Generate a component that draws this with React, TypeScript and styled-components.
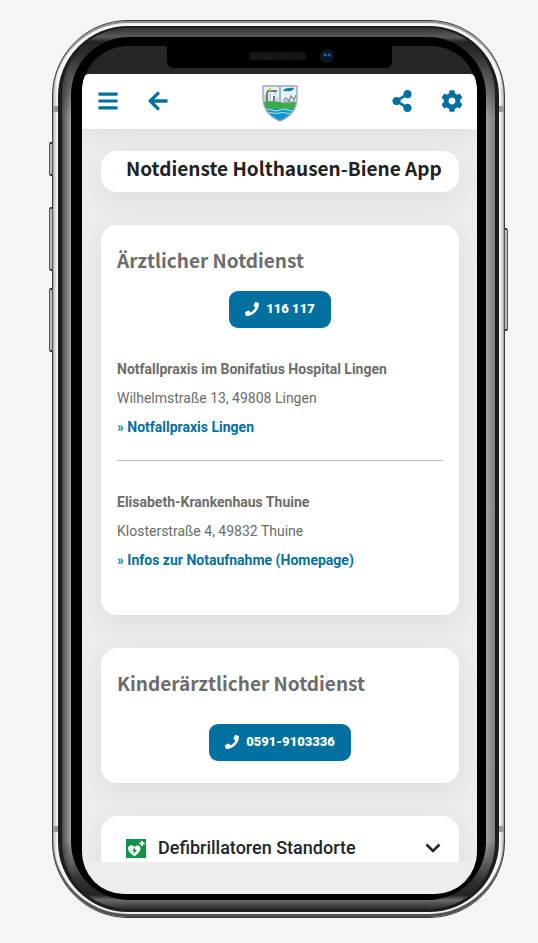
import React from 'react';
import styled, { createGlobalStyle } from 'styled-components';
import { FaArrowLeft, FaBars, FaCog, FaPhone, FaShareAlt } from 'react-icons/fa';

const GlobalStyle = createGlobalStyle`
  *, *::before, *::after { box-sizing: border-box; }
  body {
    margin: 0;
    background: #f5f5f5;
    font-family: Roboto, sans-serif;
    font-size: 14px;
    color: #6c6c6c;
  }
`;

const Stage = styled.div`
  height: 100vh;
  min-height: 600px;
  padding: 20px 33px 25px 52px;
`;

/* Phone housing: nested layers from the polished rim to the glass. */
const Rim = styled.div`
  position: relative;
  height: 100%;
  padding: 5px;
  border: 1px solid #3a3b3c;
  border-radius: 76px;
  background: linear-gradient(to right, #b9b9b9, #f6f6f6 4px, #f6f6f6 calc(100% - 4px), #b0b0b0);
  box-shadow: inset 0 -3px 1px #4b4b4b, inset 0 2px 1px #8b8b8b;
`;

const Band = styled.div`
  height: 100%;
  padding: 2px 4px 3px;
  border-radius: 70px;
  background: #1b1d1e;
`;

const Chamfer = styled.div`
  height: 100%;
  padding: 9px;
  border-radius: 66px;
  background:
    linear-gradient(to bottom, #333, #5a5a5a 9px, #222 14px, #333 30px, transparent 90px),
    linear-gradient(to top, #2c2c2c, #6b6b6b 9px, #222 14px, #333 30px, transparent 70px),
    linear-gradient(to right, #4a4a4a, #a2a2a2 9px, #a2a2a2 calc(100% - 9px), #808080);
`;

const Glass = styled.div`
  height: 100%;
  padding: 9px 9px 6px 11px;
  border-radius: 58px;
  background: #000;
`;

const Display = styled.div`
  display: flex;
  flex-direction: column;
  height: 100%;
  overflow: hidden;
  border-radius: 46px 46px 42px 42px;
  background: #242629;
`;

const StatusArea = styled.div`
  flex: none;
  display: flex;
  justify-content: center;
  height: 28px;
`;

const Notch = styled.div`
  display: flex;
  align-items: center;
  justify-content: flex-end;
  gap: 14px;
  width: 57%;
  height: 22px;
  padding: 0 58px 2px 0;
  border-radius: 0 0 6px 6px;
  background: #000;
`;

const Speaker = styled.span`
  width: 57px;
  height: 8px;
  border-radius: 4px;
  background: repeating-linear-gradient(45deg, #1c1c1c 0 1px, #101010 1px 2px);
`;

const Camera = styled.span`
  width: 14px;
  height: 14px;
  border-radius: 50%;
  background:
    radial-gradient(circle at 5px 6px, #2d5ea8 0 1px, transparent 2px),
    radial-gradient(circle at 9px 6px, #2d5ea8 0 1px, transparent 2px),
    radial-gradient(circle, #07122c 0 4px, #14171c 5px);
`;

const SideButton = styled.span<{ $side: 'left' | 'right'; $top: number; $length: number }>`
  position: absolute;
  top: ${(p) => p.$top}px;
  ${(p) => p.$side}: -4px;
  width: 4px;
  height: ${(p) => p.$length}px;
  border: 1px solid #555;
  border-top: 2px solid #333;
  border-bottom: 2px solid #333;
  border-radius: ${(p) => (p.$side === 'left' ? '2px 0 0 2px' : '0 2px 2px 0')};
  background: #bdbdbd;
`;

const AntennaLine = styled.span<{ $side: 'left' | 'right'; $edge: 'top' | 'bottom' }>`
  position: absolute;
  ${(p) => p.$edge}: 85px;
  ${(p) => p.$side}: 0;
  width: 5px;
  height: 6px;
  background: #999;
`;

/* Application */
const AppFrame = styled.div`
  flex: 1;
  display: flex;
  flex-direction: column;
  min-height: 0;
  padding-bottom: 32px;
  border-radius: 8px 8px 0 0;
  overflow: hidden;
  background: #ededed;
`;

const Header = styled.header`
  position: relative;
  flex: none;
  display: grid;
  grid-template-columns: 1fr auto 1fr;
  align-items: center;
  height: 55px;
  padding: 0 14px 2px 15px;
  background: #fff;
  box-shadow: 0 4px 24px rgba(0, 0, 0, 0.08);
`;

const Actions = styled.div<{ $end?: boolean }>`
  display: flex;
  gap: 28px;
  justify-content: ${(p) => (p.$end ? 'flex-end' : 'flex-start')};
`;

const IconButton = styled.button`
  display: flex;
  align-items: center;
  justify-content: center;
  width: 22px;
  height: 24px;
  padding: 0;
  border: 0;
  background: none;
  color: #00709f;
  cursor: pointer;
`;

const CrestLink = styled.a`
  display: block;
  width: 36px;
  height: 37px;
  margin-top: 6px;
`;

const Content = styled.main`
  flex: 1;
  display: flex;
  flex-direction: column;
  gap: 33px;
  min-height: 0;
  padding: 22px 18px 0 19px;
  overflow-y: auto;
  scrollbar-width: none;
`;

const Card = styled.section`
  flex: none;
  padding: 20px 16px;
  border-radius: 16px;
  background: #fff;
  box-shadow: 0 8px 32px rgba(0, 0, 0, 0.07);
`;

const TitleCard = styled(Card)`
  padding: 0 16px 7px 25px;
`;

const Title = styled.h1`
  margin: 0;
  font: 700 19px/34px 'Noto Sans CJK SC', sans-serif;
  color: #212121;
  white-space: nowrap;
`;

const Heading = styled.h2`
  margin: 0;
  font: 700 19px/30px 'Noto Sans CJK SC', sans-serif;
  color: #6c6c6c;
`;

const CallRow = styled.div<{ $top: number }>`
  display: flex;
  justify-content: center;
  padding-top: ${(p) => p.$top}px;
`;

const CallButton = styled.a`
  display: flex;
  align-items: center;
  gap: 7px;
  height: 37px;
  padding: 0 16px 2px;
  border-radius: 9px;
  background: #00709f;
  color: #fff;
  font-size: 13px;
  font-weight: 900;
  text-decoration: none;
`;

const Place = styled.address`
  font-style: normal;
  line-height: 29px;
`;

const Line = styled.div``;

const PlaceName = styled.strong`
  font-weight: 700;
`;

const PlaceLink = styled.a`
  color: #00709f;
  font-weight: 700;
  text-decoration: none;
`;

const LinkMark = styled.span`
  font-weight: 500;
`;

const Rule = styled.hr`
  margin: 18px 0 27px;
  border: 0;
  border-top: 1px solid #bdbdbd;
`;

const EmergencyCard = styled(Card)`
  padding-bottom: 40px;
`;

const Places = styled.div`
  padding-top: 27px;
`;

const PediatricCard = styled(Card)`
  padding-bottom: 22px;
`;

const AccordionCard = styled(Card)`
  padding: 16px 18px 16px 25px;
`;

const AccordionButton = styled.button`
  display: flex;
  align-items: center;
  gap: 12px;
  width: 100%;
  height: 32px;
  padding: 0;
  border: 0;
  background: none;
  font: 500 18px/32px Roboto, sans-serif;
  color: #212529;
  text-align: left;
  cursor: pointer;
`;

const AccordionLabel = styled.span`
  flex: 1;
`;

const Crest = () => (
  <svg width="36" height="37" viewBox="0 0 36 37" aria-hidden="true">
    <defs>
      <clipPath id="shield">
        <path d="M1 1H35V12C35 25 28 32 18 36C8 32 1 25 1 12Z" />
      </clipPath>
    </defs>
    <g clipPath="url(#shield)">
      <path fill="#e4f3f9" d="M0 0H36V37H0Z" />
      <path fill="#39ad49" d="M0 17Q9 15 18 17T36 16V25H0Z" />
      <path fill="#0d94d2" d="M0 24H36V37H0Z" />
      <path fill="none" stroke="#b5e4f5" d="M2 25q4-2 8 0t8 0t8 0t8 0M5 28q3-1 6 0t6 0t6 0t7 0" />
      <path fill="none" stroke="#6d7a80" strokeWidth="2" d="M5 17V7M5 6H15M12 16V11" />
      <path fill="none" stroke="#a4adb1" d="M3 17V10M8 17V8M13 7V10M15 12V17" />
      <path fill="#e4c13a" d="M7 3h2v3H7z" />
      <path fill="#167da8" d="M16 5M21 5q2-2 6-2q5-1 5 1q-3 3-7 2q-3 1-4-1Z" />
      <path fill="none" stroke="#8d989c" strokeWidth="1.500" d="M21 16l3-3 3 3 2-5 3 4 2-5M22 17h10" />
      <path stroke="#5f7f79" d="M18 1V23" />
    </g>
    <path fill="none" stroke="#9da9ac" strokeWidth="1.400" d="M1 1H35V12C35 25 28 32 18 36C8 32 1 25 1 12Z" />
  </svg>
);

const AedSign = () => (
  <svg width="20" height="19" viewBox="0 0 20 19" aria-hidden="true">
    <path fill="#109447" d="M0 0H20V19H0Z" />
    <path fill="#fff" d="M8.500 17.500C4 14 2 12 2 9.500C2 6 6.500 5 8.500 8C10 5.500 14.500 6 14.500 9.500C14.500 12 12.500 14 8.500 17.500Z" />
    <path fill="#109447" d="M9.500 8L6 12H8L7.500 15L11 11H9Z" />
    <path fill="#fff" d="M15 2h2v1.500h1.500v2h-1.500v1.500h-2V5.500h-1.500v-2H15Z" />
  </svg>
);

const Chevron = () => (
  <svg width="16" height="10" viewBox="0 0 16 10" aria-hidden="true">
    <path d="M1.500 1.500L8 8L14.500 1.500" fill="none" stroke="#212529" strokeWidth="2.600" />
  </svg>
);

interface PlaceInfoProps {
  name: string;
  street: string;
  linkText: string;
}

const PlaceInfo = ({ name, street, linkText }: PlaceInfoProps) => (
  <Place>
    <Line><PlaceName>{name}</PlaceName></Line>
    <Line>{street}</Line>
    <Line><PlaceLink href="#"><LinkMark>»</LinkMark> {linkText}</PlaceLink></Line>
  </Place>
);

export default function App() {
  return (
    <>
      <GlobalStyle />
      <Stage>
        <Rim>
          <SideButton $side="left" $top={121} $length={34} />
          <SideButton $side="left" $top={186} $length={64} />
          <SideButton $side="left" $top={267} $length={64} />
          <SideButton $side="right" $top={207} $length={103} />
          <AntennaLine $side="left" $edge="top" />
          <AntennaLine $side="right" $edge="top" />
          <AntennaLine $side="left" $edge="bottom" />
          <AntennaLine $side="right" $edge="bottom" />
          <Band>
            <Chamfer>
              <Glass>
                <Display>
                  <StatusArea>
                    <Notch><Speaker /><Camera /></Notch>
                  </StatusArea>
                  <AppFrame>
                    <Header>
                      <Actions>
                        <IconButton aria-label="Menü"><FaBars size={22} /></IconButton>
                        <IconButton aria-label="Zurück"><FaArrowLeft size={22} /></IconButton>
                      </Actions>
                      <CrestLink href="#" aria-label="Startseite"><Crest /></CrestLink>
                      <Actions $end>
                        <IconButton aria-label="Teilen"><FaShareAlt size={22} /></IconButton>
                        <IconButton aria-label="Einstellungen"><FaCog size={22} /></IconButton>
                      </Actions>
                    </Header>
                    <Content>
                      <TitleCard>
                        <Title>Notdienste Holthausen-Biene App</Title>
                      </TitleCard>
                      <EmergencyCard>
                        <Heading>Ärztlicher Notdienst</Heading>
                        <CallRow $top={16}>
                          <CallButton href="tel:116117"><FaPhone size={14} />116 117</CallButton>
                        </CallRow>
                        <Places>
                          <PlaceInfo
                            name="Notfallpraxis im Bonifatius Hospital Lingen"
                            street="Wilhelmstraße 13, 49808 Lingen"
                            linkText="Notfallpraxis Lingen"
                          />
                          <Rule />
                          <PlaceInfo
                            name="Elisabeth-Krankenhaus Thuine"
                            street="Klosterstraße 4, 49832 Thuine"
                            linkText="Infos zur Notaufnahme (Homepage)"
                          />
                        </Places>
                      </EmergencyCard>
                      <PediatricCard>
                        <Heading>Kinderärztlicher Notdienst</Heading>
                        <CallRow $top={26}>
                          <CallButton href="tel:05919103336"><FaPhone size={14} />0591-9103336</CallButton>
                        </CallRow>
                      </PediatricCard>
                      <AccordionCard>
                        <AccordionButton aria-expanded="false">
                          <AedSign />
                          <AccordionLabel>Defibrillatoren Standorte</AccordionLabel>
                          <Chevron />
                        </AccordionButton>
                      </AccordionCard>
                    </Content>
                  </AppFrame>
                </Display>
              </Glass>
            </Chamfer>
          </Band>
        </Rim>
      </Stage>
    </>
  );
}
